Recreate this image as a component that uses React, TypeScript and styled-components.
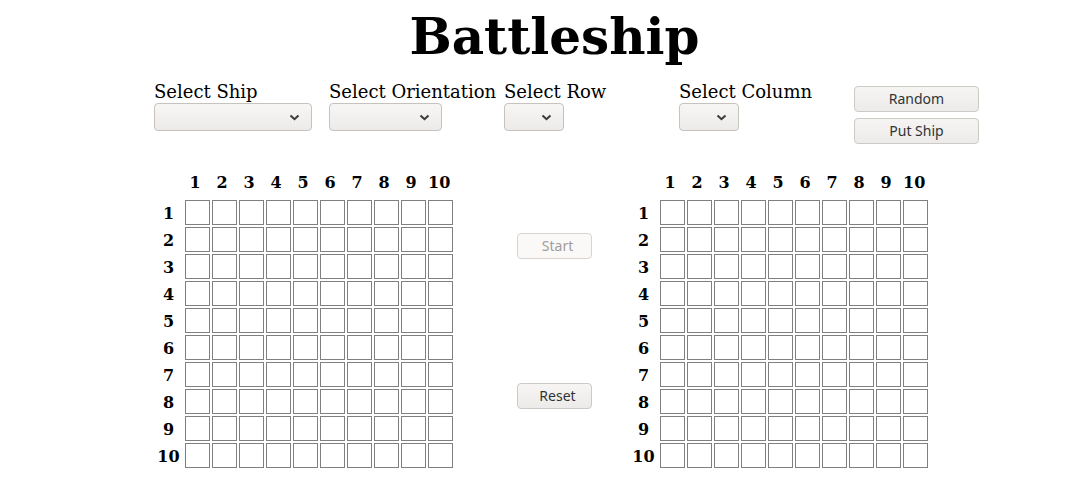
import React from "react";
import styled, { createGlobalStyle } from "styled-components";

const Global = createGlobalStyle`
  html, body { margin: 0; padding: 0; background: #fff; }
  body { font-family: "DejaVu Serif", serif; color: #000; }
`;

const Page = styled.div`
  width: 1083px;
  height: 501px;
  overflow: hidden;
`;

const Title = styled.h1`
  margin: 0;
  padding-top: 7px;
  text-align: center;
  font-family: "DejaVu Serif", serif;
  font-weight: bold;
  font-size: 50px;
  line-height: 60px;
  height: 74px;
  padding-left: 26px;
`;

const Controls = styled.div`
  display: flex;
  align-items: flex-start;
  padding-left: 154px;
  height: 90px;
`;

const Field = styled.div`
  width: 175px;
  display: flex;
  flex-direction: column;
  align-items: flex-start;
`;

const Label = styled.div`
  font-family: "DejaVu Serif", serif;
  font-size: 18px;
  line-height: 21px;
  white-space: nowrap;
`;

const SelectBox = styled.div<{ $w: number }>`
  width: ${(p) => p.$w}px;
  height: 28px;
  margin-top: 1px;
  box-sizing: border-box;
  border: 1px solid #c6c2bd;
  border-radius: 4px;
  background: linear-gradient(#f7f6f5, #edebe9);
  display: flex;
  align-items: center;
  justify-content: flex-end;
  padding-right: 11px;
  color: #3a3a3a;
`;

const ButtonStack = styled.div`
  display: flex;
  flex-direction: column;
  gap: 6px;
  padding-top: 5px;
`;

const Btn = styled.button<{ $w: number; $shift?: number }>`
  width: ${(p) => p.$w}px;
  height: 26px;
  box-sizing: border-box;
  border: 1px solid #cdc9c4;
  border-radius: 4px;
  background: linear-gradient(#f6f5f4, #edebe9);
  font-family: "Noto Sans", "Open Sans", sans-serif;
  font-size: 14px;
  line-height: 16px;
  color: #2e3436;
  padding: 0 0 0 ${(p) => p.$shift ?? 0}px;
  cursor: pointer;
  &:disabled {
    background: #faf9f8;
    border-color: #d8d4d0;
    color: #a19d99;
    cursor: default;
  }
`;

const BoardsRow = styled.div`
  display: flex;
  align-items: flex-start;
  padding-left: 155px;
`;

const Board = styled.div`
  display: grid;
  grid-template-columns: 26px repeat(10, 25px);
  grid-auto-rows: 25px;
  gap: 2px;
  padding: 2px;
`;

const ColHead = styled.div`
  font-family: "DejaVu Serif", serif;
  font-weight: bold;
  font-size: 16px;
  line-height: 18px;
  text-align: center;
  padding-right: 5px;
  padding-top: 1px;
  white-space: nowrap;
`;

const RowHead = styled.div`
  font-family: "DejaVu Serif", serif;
  font-weight: bold;
  font-size: 16px;
  display: flex;
  align-items: center;
  justify-content: center;
  padding-right: 3px;
  padding-top: 1px;
`;

const Cell = styled.div`
  box-sizing: border-box;
  border: 1px solid #808080;
  background: #fff;
`;

const Middle = styled.div`
  width: 175px;
  box-sizing: border-box;
  padding-left: 62px;
  padding-top: 62px;
  display: flex;
  flex-direction: column;
  gap: 124px;
`;

const Chevron = () => (
  <svg width="11" height="7" viewBox="0 0 11 7">
    <path d="M1.5 1.5 L5.5 5.2 L9.5 1.5" fill="none" stroke="#3a3a3a" strokeWidth="2" />
  </svg>
);

const nums = Array.from({ length: 10 }, (_, i) => i + 1);

const BoardGrid = () => (
  <Board>
    <div />
    {nums.map((n) => (
      <ColHead key={"c" + n}>{n}</ColHead>
    ))}
    {nums.map((r) => (
      <React.Fragment key={"r" + r}>
        <RowHead>{r}</RowHead>
        {nums.map((c) => (
          <Cell key={c} />
        ))}
      </React.Fragment>
    ))}
  </Board>
);

export default function App() {
  return (
    <Page>
      <Global />
      <Title>Battleship</Title>
      <Controls>
        <Field>
          <Label>Select Ship</Label>
          <SelectBox $w={158}><Chevron /></SelectBox>
        </Field>
        <Field>
          <Label>Select Orientation</Label>
          <SelectBox $w={113}><Chevron /></SelectBox>
        </Field>
        <Field>
          <Label>Select Row</Label>
          <SelectBox $w={60}><Chevron /></SelectBox>
        </Field>
        <Field>
          <Label>Select Column</Label>
          <SelectBox $w={60}><Chevron /></SelectBox>
        </Field>
        <ButtonStack>
          <Btn $w={125}>Random</Btn>
          <Btn $w={125}>Put Ship</Btn>
        </ButtonStack>
      </Controls>
      <BoardsRow>
        <BoardGrid />
        <Middle>
          <Btn $w={75} $shift={6} disabled>Start</Btn>
          <Btn $w={75} $shift={6}>Reset</Btn>
        </Middle>
        <BoardGrid />
      </BoardsRow>
    </Page>
  );
}
